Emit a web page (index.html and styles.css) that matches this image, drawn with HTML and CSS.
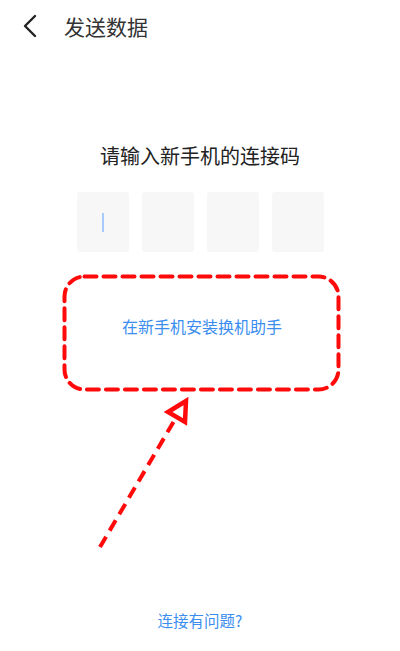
FILE: index.html
```html
<!DOCTYPE html>
<html lang="zh-CN">
<head>
    <meta charset="UTF-8">
    <meta name="viewport" content="width=device-width, initial-scale=1.0">
    <title>发送数据</title>
    <link rel="stylesheet" href="styles.css">
</head>
<body>
    <div class="page">
        <div class="top-bar">
            <svg class="back-icon" width="16" height="24" viewBox="0 0 16 24">
                <path d="M13 2 L3 12 L13 22" fill="none" stroke="#222" stroke-width="2.4" stroke-linecap="round" stroke-linejoin="round"/>
            </svg>
            <span class="title">发送数据</span>
        </div>

        <h2 class="prompt">请输入新手机的连接码</h2>

        <div class="code-boxes">
            <div class="code-box"><span class="cursor"></span></div>
            <div class="code-box"></div>
            <div class="code-box"></div>
            <div class="code-box"></div>
        </div>

        <div class="install-box">
            <!-- 红色虚线标注框 -->
            <svg class="dash-frame" width="279" height="119" viewBox="0 0 279 119">
                <rect x="2.5" y="2.5" width="274" height="113" rx="20" ry="20" fill="none" stroke="#ff0a0a" stroke-width="4" stroke-dasharray="12 7" stroke-linecap="round"/>
            </svg>
            <a class="link install-link">在新手机安装换机助手</a>
        </div>

        <div class="spacer"></div>

        <a class="link help-link">连接有问题?</a>

        <!-- 标注箭头 -->
        <svg class="arrow" width="400" height="651" viewBox="0 0 400 651">
            <line x1="100" y1="547" x2="177" y2="416" stroke="#ff0a0a" stroke-width="4" stroke-dasharray="12 7"/>
            <polygon points="186,401 168,412 185,422" fill="none" stroke="#ff0a0a" stroke-width="4.5" stroke-linejoin="miter"/>
        </svg>
    </div>
</body>
</html>
```

FILE: styles.css
```css
body {
    margin: 0;
    font-family: "Noto Sans CJK SC", "Noto Sans", sans-serif;
    background-color: #fff;
}

.page {
    position: relative;
    width: 400px;
    height: 651px;
    display: flex;
    flex-direction: column;
    align-items: center;
    overflow: hidden;
}

.top-bar {
    align-self: stretch;
    height: 52px;
    display: flex;
    align-items: center;
    padding-left: 22px;
}

.back-icon {
    margin-right: 26px;
}

.title {
    font-size: 21px;
    color: #333;
}

.prompt {
    margin: 90px 0 0;
    font-size: 20px;
    font-weight: normal;
    color: #222;
    line-height: 28px;
}

.code-boxes {
    display: flex;
    gap: 13px;
    margin-top: 22px;
    margin-left: 1px;
}

.code-box {
    width: 52px;
    height: 60px;
    background-color: #f7f7f7;
    border-radius: 3px;
    display: flex;
    align-items: center;
    justify-content: center;
}

.cursor {
    width: 2px;
    height: 19px;
    background-color: #a7cbff;
}

.install-box {
    position: relative;
    width: 279px;
    height: 119px;
    margin-top: 22px;
    margin-left: 3px;
    display: flex;
    align-items: center;
    justify-content: center;
}

.dash-frame {
    position: absolute;
    top: 0;
    left: 0;
}

.link {
    color: #3b8ef0;
    font-size: 15.5px;
}

.install-link {
    font-size: 16px;
    margin-bottom: 16px;
    margin-left: 1px;
}

.spacer {
    flex: 1;
}

.help-link {
    margin-bottom: 20px;
    margin-left: 0;
}

.arrow {
    position: absolute;
    top: 0;
    left: 0;
    pointer-events: none;
}
```
